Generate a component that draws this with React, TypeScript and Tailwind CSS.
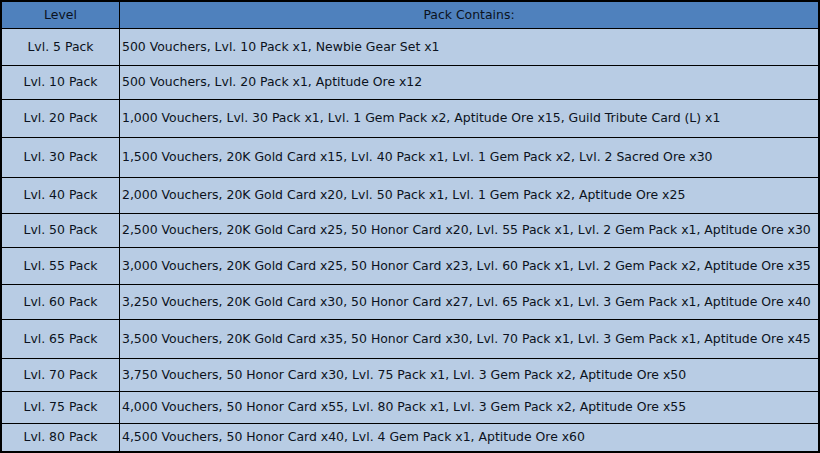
const rows: [string, string, number][] = [
  ['Lvl. 5 Pack', '500 Vouchers, Lvl. 10 Pack x1, Newbie Gear Set x1', 37],
  ['Lvl. 10 Pack', '500 Vouchers, Lvl. 20 Pack x1, Aptitude Ore x12', 34],
  ['Lvl. 20 Pack', '1,000 Vouchers, Lvl. 30 Pack x1, Lvl. 1 Gem Pack x2, Aptitude Ore x15, Guild Tribute Card (L) x1', 38],
  ['Lvl. 30 Pack', '1,500 Vouchers, 20K Gold Card x15, Lvl. 40 Pack x1, Lvl. 1 Gem Pack x2, Lvl. 2 Sacred Ore x30', 40],
  ['Lvl. 40 Pack', '2,000 Vouchers, 20K Gold Card x20, Lvl. 50 Pack x1, Lvl. 1 Gem Pack x2, Aptitude Ore x25', 36],
  ['Lvl. 50 Pack', '2,500 Vouchers, 20K Gold Card x25, 50 Honor Card x20, Lvl. 55 Pack x1, Lvl. 2 Gem Pack x1, Aptitude Ore x30', 34],
  ['Lvl. 55 Pack', '3,000 Vouchers, 20K Gold Card x25, 50 Honor Card x23, Lvl. 60 Pack x1, Lvl. 2 Gem Pack x2, Aptitude Ore x35', 37],
  ['Lvl. 60 Pack', '3,250 Vouchers, 20K Gold Card x30, 50 Honor Card x27, Lvl. 65 Pack x1, Lvl. 3 Gem Pack x1, Aptitude Ore x40', 35],
  ['Lvl. 65 Pack', '3,500 Vouchers, 20K Gold Card x35, 50 Honor Card x30, Lvl. 70 Pack x1, Lvl. 3 Gem Pack x1, Aptitude Ore x45', 39],
  ['Lvl. 70 Pack', '3,750 Vouchers, 50 Honor Card x30, Lvl. 75 Pack x1, Lvl. 3 Gem Pack x2, Aptitude Ore x50', 33],
  ['Lvl. 75 Pack', '4,000 Vouchers, 50 Honor Card x55, Lvl. 80 Pack x1, Lvl. 3 Gem Pack x2, Aptitude Ore x55', 32],
  ['Lvl. 80 Pack', '4,500 Vouchers, 50 Honor Card x40, Lvl. 4 Gem Pack x1, Aptitude Ore x60', 27],
];

export default function App() {
  return (
    <main
      className="w-[820px] h-[453px] bg-[#b8cce4] text-[12.45px] text-[#0b1220] border-2 border-black flex flex-col overflow-hidden"
      style={{ fontFamily: '"DejaVu Sans", sans-serif' }}
    >
      {/* Header */}
      <div className="flex h-[27px] bg-[#4f81bd] border-b border-black shrink-0">
        <div className="w-[118px] border-r border-black flex items-center justify-center">Level</div>
        <div className="flex-1 flex items-center justify-center">Pack Contains:</div>
      </div>

      {rows.map(([level, contents, h], i) => (
        <div
          key={level}
          className={`flex shrink-0 ${i < rows.length - 1 ? 'border-b border-black' : ''}`}
          style={{ height: h }}
        >
          <div className="w-[118px] border-r border-black flex items-center justify-center whitespace-nowrap">
            {level}
          </div>
          <div className="flex-1 flex items-center pl-[2px] whitespace-nowrap">{contents}</div>
        </div>
      ))}
    </main>
  );
}
